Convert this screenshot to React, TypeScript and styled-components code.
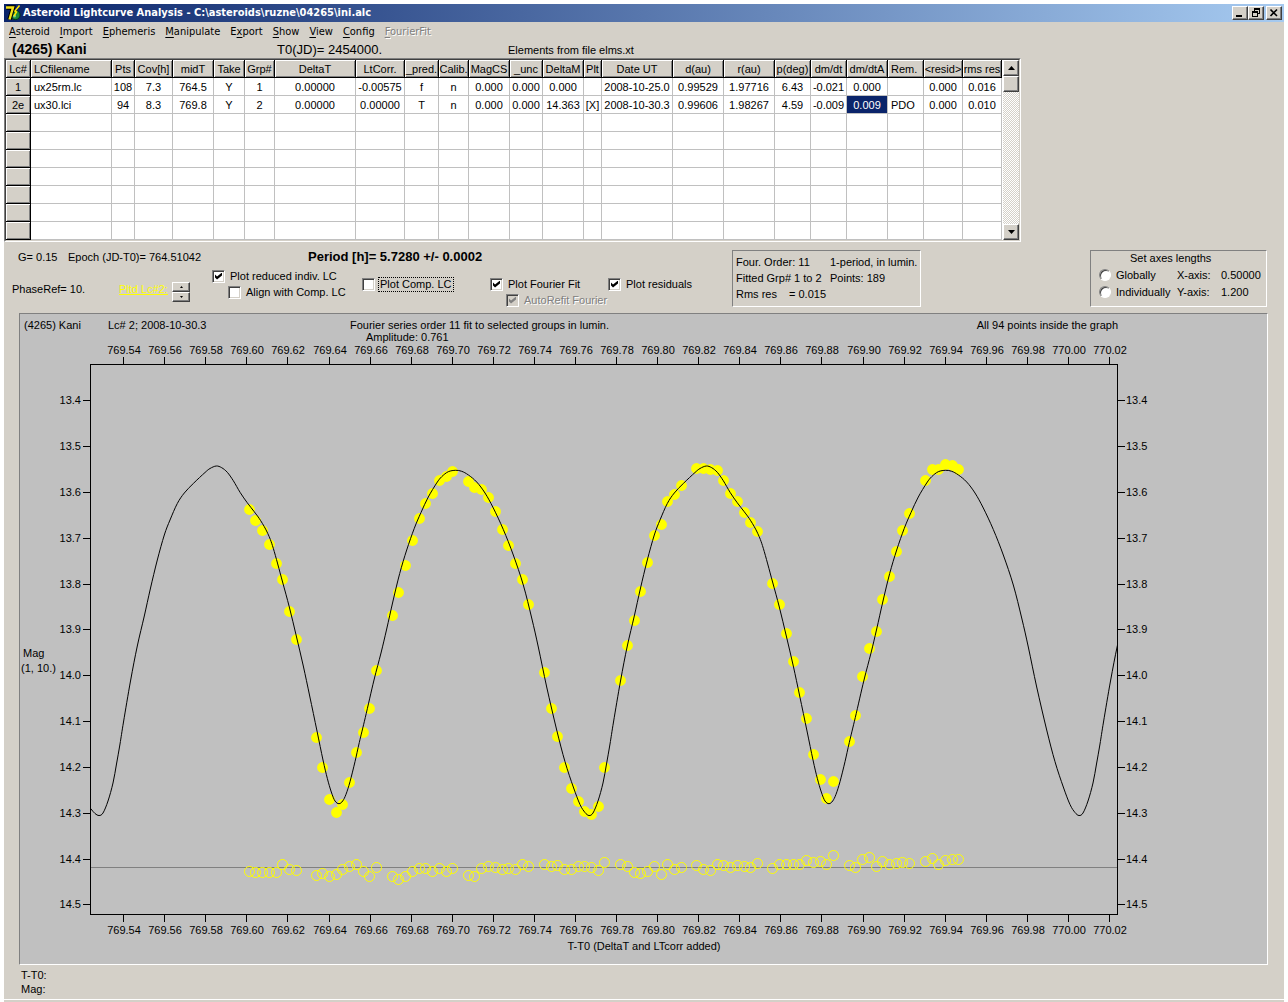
import React from "react";
import styled, { createGlobalStyle, css } from "styled-components";

const face = "#d4d0c8";
const shade = "#808080";
const dark = "#404040";

const GlobalStyle = createGlobalStyle`
  *, *::before, *::after { box-sizing: border-box; }
  body {
    margin: 0;
    background: #fff;
    color: #000;
    font: 11px/14px "Liberation Sans", Arial, sans-serif;
  }
  button, input { font: inherit; color: inherit; margin: 0; }
`;

const raised = css`
  background: ${face};
  border: 1px solid;
  border-color: #fff ${dark} ${dark} #fff;
  box-shadow: inset -1px -1px ${shade};
`;

const Page = styled.div`
  display: flex;
  min-height: 100vh;
  padding: 4px 4px 0;
`;

const Window = styled.main`
  flex: 1;
  min-width: 0;
  display: flex;
  flex-direction: column;
  background: ${face};
`;

/* ---------- title bar ---------- */

const TitleBar = styled.header`
  display: flex;
  align-items: center;
  height: 18px;
  padding: 0 2px 0 1px;
  gap: 2px;
  background: linear-gradient(to right, #0a246a, #a6caf0);
`;

const Title = styled.h1`
  flex: 1;
  margin: 0;
  color: #fff;
  font: bold 11px/18px "DejaVu Sans Condensed", "DejaVu Sans", sans-serif;
  white-space: nowrap;
`;

const CaptionButtons = styled.div`
  display: flex;
`;

const CaptionButton = styled.button`
  ${raised}
  display: flex;
  width: 16px;
  height: 14px;
  padding: 0 0 0 1px;
  &:last-child { margin-left: 2px; }
`;

/* ---------- menu ---------- */

const Menu = styled.nav`
  display: flex;
  height: 19px;
`;

const MenuButton = styled.button`
  padding: 0 5px;
  border: 0;
  background: none;
  font: 11px/20px "DejaVu Sans Condensed", "DejaVu Sans", sans-serif;
  u { text-underline-offset: 2px; }
  &:disabled { color: ${shade}; text-shadow: 1px 1px #fff; }
`;

const Heading = styled.div`
  display: grid;
  grid-template-columns: 265px 231px 1fr;
  align-items: center;
  height: 17px;
  padding-left: 8px;
  white-space: nowrap;
`;

const Target = styled.h2`
  margin: 0;
  font-size: 14px;
  line-height: 17px;
`;

const Epoch0 = styled.span`
  font-size: 13px;
  line-height: 17px;
`;

/* ---------- grid ---------- */

const GridFrame = styled.section`
  display: flex;
  align-self: flex-start;
  border: 1px solid;
  border-color: ${shade} #fff #fff ${shade};
  background: #fff;
`;

const GridInner = styled.div`
  display: flex;
  gap: 1px;
  border: 1px solid;
  border-color: ${dark} ${face} ${face} ${dark};
`;

const Table = styled.table`
  width: 996px;
  table-layout: fixed;
  border-collapse: separate;
  border-spacing: 0;
`;

type Align = "left" | "center";

const HeadCell = styled.th<{ $align?: Align }>`
  height: 18px;
  padding: 0 ${(p) => (p.$align === "left" ? 3 : 0)}px;
  overflow: hidden;
  background: ${face};
  border: solid #000;
  border-width: 0 1px 1px 0;
  box-shadow: inset 1px 1px #fff, inset -1px -1px ${shade};
  font-weight: normal;
  line-height: 16px;
  text-align: ${(p) => p.$align ?? "center"};
  white-space: nowrap;
`;

const Cell = styled.td<{ $align?: Align; $selected?: boolean }>`
  height: 18px;
  padding: 0 ${(p) => (p.$align === "left" ? 3 : 0)}px;
  border: solid #c0c0c0;
  border-width: 0 1px 1px 0;
  background: ${(p) => (p.$selected ? "#0a246a" : "#fff")};
  color: ${(p) => (p.$selected ? "#fff" : "#000")};
  line-height: 16px;
  text-align: ${(p) => p.$align ?? "center"};
  white-space: nowrap;
`;

const ScrollBar = styled.div`
  display: flex;
  flex-direction: column;
  width: 16px;
  background: repeating-conic-gradient(#fff 0 25%, ${face} 0 50%) 0 0 / 2px 2px;
`;

const ScrollButton = styled.button`
  ${raised}
  display: flex;
  align-items: center;
  justify-content: center;
  width: 16px;
  height: 16px;
  padding: 0;
`;

const Thumb = styled.div`
  ${raised}
  height: 16px;
  margin-bottom: auto;
`;

/* ---------- controls ---------- */

const Controls = styled.section`
  display: flex;
  align-items: flex-start;
  padding: 8px 17px 5px 8px;
  white-space: nowrap;
`;

const Options = styled.div`
  width: 720px;
`;

const Summary = styled.div`
  display: grid;
  grid-template-columns: 50px 240px 1fr;
  padding-left: 6px;
  margin-bottom: 4px;
`;

const Period = styled.strong`
  font-size: 13px;
`;

const OptionRow = styled.div`
  display: grid;
  grid-template-columns: 107px 53px 40px 150px 128px 118px 1fr;
`;

const Option = styled.div<{ $drop?: boolean }>`
  display: flex;
  flex-direction: column;
  align-items: flex-start;
  padding-top: ${(p) => (p.$drop ? 8 : 0)}px;
`;

const Aside = styled.div`
  padding-top: 14px;
`;

const PlottedLink = styled.a`
  color: #ff0;
`;

const Spinner = styled.div`
  display: flex;
  flex-direction: column;
  width: 18px;
`;

const SpinButton = styled(ScrollButton)`
  width: 18px;
  height: 10px;
`;

const Check = styled.label<{ $indent?: boolean; $focused?: boolean; $off?: boolean }>`
  display: flex;
  align-items: center;
  gap: 3px;
  height: 16px;
  margin-left: ${(p) => (p.$indent ? 16 : 0)}px;
  color: ${(p) => (p.$off ? shade : "inherit")};
  text-shadow: ${(p) => (p.$off ? "1px 1px #fff" : "none")};
  span {
    padding: 0 1px;
    border: 1px dotted ${(p) => (p.$focused ? "#000" : "transparent")};
    line-height: 13px;
  }
`;

const Box = styled.input`
  appearance: none;
  display: grid;
  place-items: center;
  width: 13px;
  height: 13px;
  background: #fff;
  border: 1px solid;
  border-color: ${shade} #fff #fff ${shade};
  box-shadow: inset 1px 1px ${dark}, inset -1px -1px ${face};
  outline: none;
  &:checked::before {
    content: "";
    width: 7px;
    height: 7px;
    background: #000;
    clip-path: polygon(0 29%, 29% 57%, 100% 0, 100% 43%, 29% 100%, 0 71%);
  }
  &:disabled { background: ${face}; }
  &:disabled::before { background: ${shade}; }
`;

const Radio = styled.input`
  appearance: none;
  width: 12px;
  height: 12px;
  border-radius: 50%;
  background: #fff;
  border: 1px solid;
  border-color: ${shade} #fff #fff ${shade};
  box-shadow: inset 1px 1px ${dark};
`;

const Panel = styled.div`
  border: 1px solid;
  border-color: ${shade} #fff #fff ${shade};
  height: 57px;
`;

const FitPanel = styled(Panel)`
  display: grid;
  grid-template-columns: 94px auto;
  grid-auto-rows: 16px;
  width: 189px;
  padding: 3px 3px 0;
  line-height: 16px;
`;

const RmsLine = styled.span`
  display: grid;
  grid-template-columns: 53px 1fr;
`;

const AxesPanel = styled(Panel)`
  width: 177px;
  margin-left: auto;
`;

const AxesTitle = styled.div`
  padding-left: 39px;
  line-height: 15px;
`;

const AxisRow = styled.div`
  display: grid;
  grid-template-columns: 78px 44px 1fr;
  align-items: center;
  height: 17px;
  padding-left: 8px;
  label { display: flex; align-items: center; gap: 5px; }
`;

/* ---------- chart ---------- */

const ChartPanel = styled.section`
  margin: 0 16px 0 15px;
  border: 1px solid;
  border-color: ${shade} #fff #fff ${shade};
  background: #c0c0c0;
`;

const Chart = styled.svg`
  display: block;
  width: 100%;
  height: auto;
  font-size: 11px;
`;

const StatusBar = styled.footer`
  flex: 1;
  padding: 3px 17px 0;
  margin-bottom: 2px;
  border-bottom: 1px solid #fff;
`;

const menus: [string, string, string][] = [
  ["", "A", "steroid"],
  ["", "I", "mport"],
  ["", "E", "phemeris"],
  ["", "M", "anipulate"],
  ["E", "x", "port"],
  ["", "S", "how"],
  ["", "V", "iew"],
  ["", "C", "onfig"],
  ["", "F", "ourierFit"],
];

const columns: { name: string; width: number; align?: Align }[] = [
  { name: "Lc#", width: 25 },
  { name: "LCfilename", width: 81, align: "left" },
  { name: "Pts", width: 23 },
  { name: "Cov[h]", width: 38 },
  { name: "midT", width: 41 },
  { name: "Take", width: 31 },
  { name: "Grp#", width: 30 },
  { name: "DeltaT", width: 81 },
  { name: "LtCorr.", width: 49 },
  { name: "_pred.", width: 34 },
  { name: "Calib.", width: 30 },
  { name: "MagCS", width: 41 },
  { name: "_unc", width: 33 },
  { name: "DeltaM", width: 41 },
  { name: "Plt", width: 18 },
  { name: "Date UT", width: 71 },
  { name: "d(au)", width: 51 },
  { name: "r(au)", width: 51 },
  { name: "p(deg)", width: 36 },
  { name: "dm/dt", width: 36 },
  { name: "dm/dtA", width: 41 },
  { name: "Rem.", width: 36, align: "left" },
  { name: "<resid>", width: 39 },
  { name: "rms res", width: 39 },
];

const lightcurves: string[][] = [
  ["1", "ux25rm.lc", "108", "7.3", "764.5", "Y", "1", "0.00000", "-0.00575", "f", "n", "0.000", "0.000", "0.000", "", "2008-10-25.0", "0.99529", "1.97716", "6.43", "-0.021", "0.000", "", "0.000", "0.016"],
  ["2e", "ux30.lci", "94", "8.3", "769.8", "Y", "2", "0.00000", "0.00000", "T", "n", "0.000", "0.000", "14.363", "[X]", "2008-10-30.3", "0.99606", "1.98267", "4.59", "-0.009", "0.009", "PDO", "0.000", "0.010"],
];
const emptyRows = Array.from({ length: 7 }, () => columns.map(() => ""));
const rows = [...lightcurves, ...emptyRows];

/* One rotation of the fitted curve: [x, y]. */
const PERIOD = 490;
const rotation: [number, number][] = [
  [589, 815.5], [593, 813], [598, 801], [603, 783], [606.5, 764], [610, 744], [613.5, 722], [620.5, 681],
  [627.3, 646], [634.3, 616], [640.3, 589], [647.3, 560], [654.3, 535], [660, 520], [667.3, 503.5],
  [674.3, 493], [683.3, 483.5], [695, 472.5], [700, 468.5], [706.3, 466], [711.7, 467.7], [717.3, 472.3],
  [723.3, 480.7], [730.3, 492.7], [737.3, 502.8], [744.3, 511.8], [750.7, 520.7], [757.7, 533.3],
  [763.3, 548.3], [772.3, 581], [779.3, 607], [786.3, 636], [793.3, 666], [799.7, 696], [807, 731],
  [813, 760], [817.3, 778.3], [821.3, 792], [825, 801], [829, 803.7], [832.7, 801], [836, 794.3],
  [840, 781.7], [845, 761.7], [849.3, 742.5], [855.3, 717.5], [864, 680], [871, 653], [876.7, 629],
  [883, 601], [889.7, 573.5], [896.7, 550], [904.3, 528.3], [911, 512.5], [918.3, 497], [926.7, 483],
  [931.7, 476.7], [938.3, 471.7], [945.7, 470.3], [951.7, 471.3], [958.3, 474.9], [966.7, 482],
  [975, 493], [983.3, 508], [993.3, 529.5], [1003.3, 555], [1013.3, 585], [1021.7, 618], [1028.3, 647],
  [1036.7, 687], [1046.7, 730], [1055, 761.7], [1063.3, 787], [1070, 804.5], [1075, 812.5],
];
const curve = [-1, 0, 1].flatMap((k) =>
  rotation.map(([x, y]) => [x + k * PERIOD, y] as [number, number]),
);

function smoothPath(pts: [number, number][]) {
  let d = `M${pts[0][0]} ${pts[0][1]}`;
  for (let i = 0; i < pts.length - 1; i++) {
    const a = pts[i - 1] ?? pts[i];
    const b = pts[i];
    const c = pts[i + 1];
    const e = pts[i + 2] ?? c;
    d += `C${b[0] + (c[0] - a[0]) / 6} ${b[1] + (c[1] - a[1]) / 6} ${c[0] - (e[0] - b[0]) / 6} ${c[1] - (e[1] - b[1]) / 6} ${c[0]} ${c[1]}`;
  }
  return d;
}
const curvePath = smoothPath([[86, 803], [91, 809], [95, 813.5], ...curve.filter(([x]) => x >= 99)]);

/* Observations: [x, measured y, residual y]. */
const observations: [number, number, number][] = [
  [249, 509, 871], [255, 520, 872], [262, 530, 872], [269, 544, 872], [276, 563, 872], [282, 579, 864],
  [289, 611, 869], [296, 639, 870], [316, 737, 875], [322, 767, 873], [329, 799, 876], [336, 812, 874],
  [342, 804, 869], [349, 782, 866], [356, 752, 864], [363, 732, 871], [369, 708, 876], [376, 670, 867],
  [392, 615, 876], [398, 592, 879], [405, 565, 876], [412, 540, 871], [419, 518, 868], [425, 503, 868],
  [432, 493, 871], [439, 480, 868], [446, 476, 871], [452, 471, 868], [468, 481, 875], [474, 487, 876],
  [481, 489, 868], [488, 497, 866], [495, 511, 867], [502, 529, 869], [508, 545, 868], [515, 563, 869],
  [522, 579, 864], [528, 604, 866], [544, 672, 864], [551, 708, 866], [557, 736, 865], [564, 767, 869],
  [571, 788, 869], [578, 801, 866], [584, 811, 866], [591, 814, 867], [598, 806, 870], [604, 767, 862],
  [620, 680, 864], [627, 645, 866], [634, 620, 872], [640, 591, 873], [647, 562, 871], [654, 535, 866],
  [661, 524, 874], [667, 501, 864], [674, 494, 869], [681, 485, 867], [696, 468, 865], [703, 468, 869],
  [710, 469, 870], [717, 470, 864], [723, 480, 865], [730, 493, 867], [737, 501, 865], [744, 512, 866],
  [750, 522, 867], [757, 531, 863], [772, 583, 868], [779, 604, 864], [786, 633, 864], [793, 661, 864],
  [799, 692, 864], [806, 718, 860], [813, 754, 862], [820, 779, 861], [826, 798, 864], [833, 781, 855],
  [849, 741, 865], [855, 715, 867], [862, 676, 859], [869, 648, 857], [876, 631, 866], [882, 599, 861],
  [889, 576, 864], [896, 551, 863], [902, 530, 862], [909, 513, 863], [925, 480, 861], [932, 469, 858],
  [938, 469, 864], [945, 464, 860], [952, 465, 859], [958, 469, 859],
];

const timeTicks = Array.from({ length: 25 }, (_, i) => ({
  label: (769.54 + i * 0.02).toFixed(2),
  x: Math.floor(123.65 + i * 41.077),
}));
const magTicks = Array.from({ length: 12 }, (_, i) => ({
  label: (13.4 + i * 0.1).toFixed(1),
  y: Math.floor(400.75 + i * 45.833),
}));

function AppIcon() {
  return (
    <svg width="16" height="16" viewBox="0 0 16 16" aria-hidden="true">
      <circle cx="10.5" cy="10" r="4.6" fill="#1c8a3c" stroke="#073018" />
      <circle cx="9.5" cy="11" r="1.6" fill="#6fd08a" />
      <path d="M1.5 2.5H8L4.5 14.5" fill="none" stroke="#000" strokeWidth="4.4" />
      <path d="M1 2.5H8L4.5 14.5" fill="none" stroke="#f2e21a" strokeWidth="2.4" />
      <path d="M14.5 0.5L10 6L11.5 7L9 11" fill="none" stroke="#ffe600" strokeWidth="1.5" />
    </svg>
  );
}

function LightcurveChart() {
  return (
    <Chart viewBox="20 314 1247 650" role="img" aria-label="Lightcurve with Fourier fit and residuals">
      <defs>
        <clipPath id="plot">
          <rect x="90" y="364" width="1028" height="551" />
        </clipPath>
      </defs>
      <text x="24" y="329">(4265) Kani</text>
      <text x="108" y="329">Lc# 2; 2008-10-30.3</text>
      <text x="350" y="329">Fourier series order 11 fit to selected groups in lumin.</text>
      <text x="366" y="341">Amplitude: 0.761</text>
      <text x="1118" y="329" textAnchor="end">All 94 points inside the graph</text>
      <text x="23" y="657">Mag</text>
      <text x="21" y="672">(1, 10.)</text>
      <text x="644" y="950" textAnchor="middle">T-T0 (DeltaT and LTcorr added)</text>

      <g shapeRendering="crispEdges" stroke="#000" fill="none">
        <path d="M90 867.5H1118" stroke="#808080" />
        <rect x="90.5" y="364.5" width="1027" height="550" />
        {timeTicks.map((t) => (
          <path key={t.label} d={`M${t.x + 0.5} 357V364M${t.x + 0.5} 915V922`} />
        ))}
        {magTicks.map((t) => (
          <path key={t.label} d={`M83 ${t.y + 0.5}H90M1118 ${t.y + 0.5}H1125`} />
        ))}
      </g>
      {timeTicks.map((t) => (
        <g key={t.label} textAnchor="middle">
          <text x={t.x + 1} y="354">{t.label}</text>
          <text x={t.x + 1} y="934">{t.label}</text>
        </g>
      ))}
      {magTicks.map((t) => (
        <g key={t.label}>
          <text x="81" y={t.y + 4} textAnchor="end">{t.label}</text>
          <text x="1126" y={t.y + 4}>{t.label}</text>
        </g>
      ))}
      <g transform="translate(0.5 0.5)">
        {observations.map(([x, y]) => (
          <circle key={x} cx={x} cy={y} r="5.4" fill="#ff0" />
        ))}
        {observations.map(([x, , r]) => (
          <circle key={x} cx={x} cy={r} r="5" fill="none" stroke="#ff0" />
        ))}
      </g>
      <path d={curvePath} fill="none" stroke="#000" clipPath="url(#plot)" />
    </Chart>
  );
}

const Arrow = ({ down, small }: { down?: boolean; small?: boolean }) => (
  <svg width={small ? 3 : 7} height={small ? 2 : 4} viewBox="0 0 7 4" preserveAspectRatio="none" aria-hidden="true">
    <path d={down ? "M0 0H7L3.5 4Z" : "M0 4H7L3.5 0Z"} />
  </svg>
);

export default function App() {
  return (
    <Page>
      <GlobalStyle />
      <Window>
        <TitleBar>
          <AppIcon />
          <Title>Asteroid Lightcurve Analysis - C:\asteroids\ruzne\04265\ini.alc</Title>
          <CaptionButtons>
            <CaptionButton aria-label="Minimize">
              <svg width="12" height="12" shapeRendering="crispEdges"><path d="M2 8h6v2H2z" /></svg>
            </CaptionButton>
            <CaptionButton aria-label="Restore">
              <svg width="12" height="12" shapeRendering="crispEdges">
                <path d="M4 1h6v6H8V6h1V3H5v1H4zM2 4h6v6H2zM3 6v3h4V6z" fillRule="evenodd" />
              </svg>
            </CaptionButton>
            <CaptionButton aria-label="Close">
              <svg width="12" height="12"><path d="M2.5 2.5L9 9M9 2.5L2.5 9" stroke="#000" strokeWidth="1.6" /></svg>
            </CaptionButton>
          </CaptionButtons>
        </TitleBar>

        <Menu>
          {menus.map(([before, key, after]) => (
            <MenuButton key={after} disabled={after === "ourierFit"}>
              {before}<u>{key}</u>{after}
            </MenuButton>
          ))}
        </Menu>

        <Heading>
          <Target>(4265) Kani</Target>
          <Epoch0>T0(JD)= 2454000.</Epoch0>
          <span>Elements from file elms.xt</span>
        </Heading>

        <GridFrame>
          <GridInner>
            <Table>
              <colgroup>
                {columns.map((c) => <col key={c.name} width={c.width} />)}
              </colgroup>
              <thead>
                <tr>
                  {columns.map((c) => (
                    <HeadCell key={c.name} scope="col" $align={c.align}>{c.name}</HeadCell>
                  ))}
                </tr>
              </thead>
              <tbody>
                {rows.map((row, r) => (
                  <tr key={r}>
                    <HeadCell scope="row">{row[0]}</HeadCell>
                    {row.slice(1).map((value, i) => {
                      const c = columns[i + 1];
                      return (
                        <Cell key={c.name} $align={c.align} $selected={r === 1 && c.name === "dm/dtA"}>
                          {value}
                        </Cell>
                      );
                    })}
                  </tr>
                ))}
              </tbody>
            </Table>
            <ScrollBar>
              <ScrollButton aria-label="Scroll up"><Arrow /></ScrollButton>
              <Thumb />
              <ScrollButton aria-label="Scroll down"><Arrow down /></ScrollButton>
            </ScrollBar>
          </GridInner>
        </GridFrame>

        <Controls>
          <Options>
            <Summary>
              <span>G= 0.15</span>
              <span>Epoch (JD-T0)= 764.51042</span>
              <Period>Period [h]= 5.7280 +/- 0.0002</Period>
            </Summary>
            <OptionRow>
              <Aside>PhaseRef= 10.</Aside>
              <Aside><PlottedLink href="#lc2">Pltd Lc#2:</PlottedLink></Aside>
              <Aside>
                <Spinner>
                  <SpinButton aria-label="Next lightcurve"><Arrow small /></SpinButton>
                  <SpinButton aria-label="Previous lightcurve"><Arrow small down /></SpinButton>
                </Spinner>
              </Aside>
              <Option>
                <Check><Box type="checkbox" defaultChecked /><span>Plot reduced indiv. LC</span></Check>
                <Check $indent><Box type="checkbox" /><span>Align with Comp. LC</span></Check>
              </Option>
              <Option $drop>
                <Check $focused><Box type="checkbox" /><span>Plot Comp. LC</span></Check>
              </Option>
              <Option $drop>
                <Check><Box type="checkbox" defaultChecked /><span>Plot Fourier Fit</span></Check>
                <Check $indent $off><Box type="checkbox" defaultChecked disabled /><span>AutoRefit Fourier</span></Check>
              </Option>
              <Option $drop>
                <Check><Box type="checkbox" defaultChecked /><span>Plot residuals</span></Check>
              </Option>
            </OptionRow>
          </Options>

          <FitPanel>
            <span>Four. Order: 11</span>
            <span>1-period, in lumin.</span>
            <span>Fitted Grp# 1 to 2</span>
            <span>Points: 189</span>
            <RmsLine><span>Rms res</span><span>= 0.015</span></RmsLine>
          </FitPanel>

          <AxesPanel role="group" aria-label="Set axes lengths">
            <AxesTitle>Set axes lengths</AxesTitle>
            <AxisRow>
              <label><Radio type="radio" name="axes" />Globally</label>
              <span>X-axis:</span>
              <span>0.50000</span>
            </AxisRow>
            <AxisRow>
              <label><Radio type="radio" name="axes" />Individually</label>
              <span>Y-axis:</span>
              <span>1.200</span>
            </AxisRow>
          </AxesPanel>
        </Controls>

        <ChartPanel>
          <LightcurveChart />
        </ChartPanel>

        <StatusBar>
          <div>T-T0:</div>
          <div>Mag:</div>
        </StatusBar>
      </Window>
    </Page>
  );
}
